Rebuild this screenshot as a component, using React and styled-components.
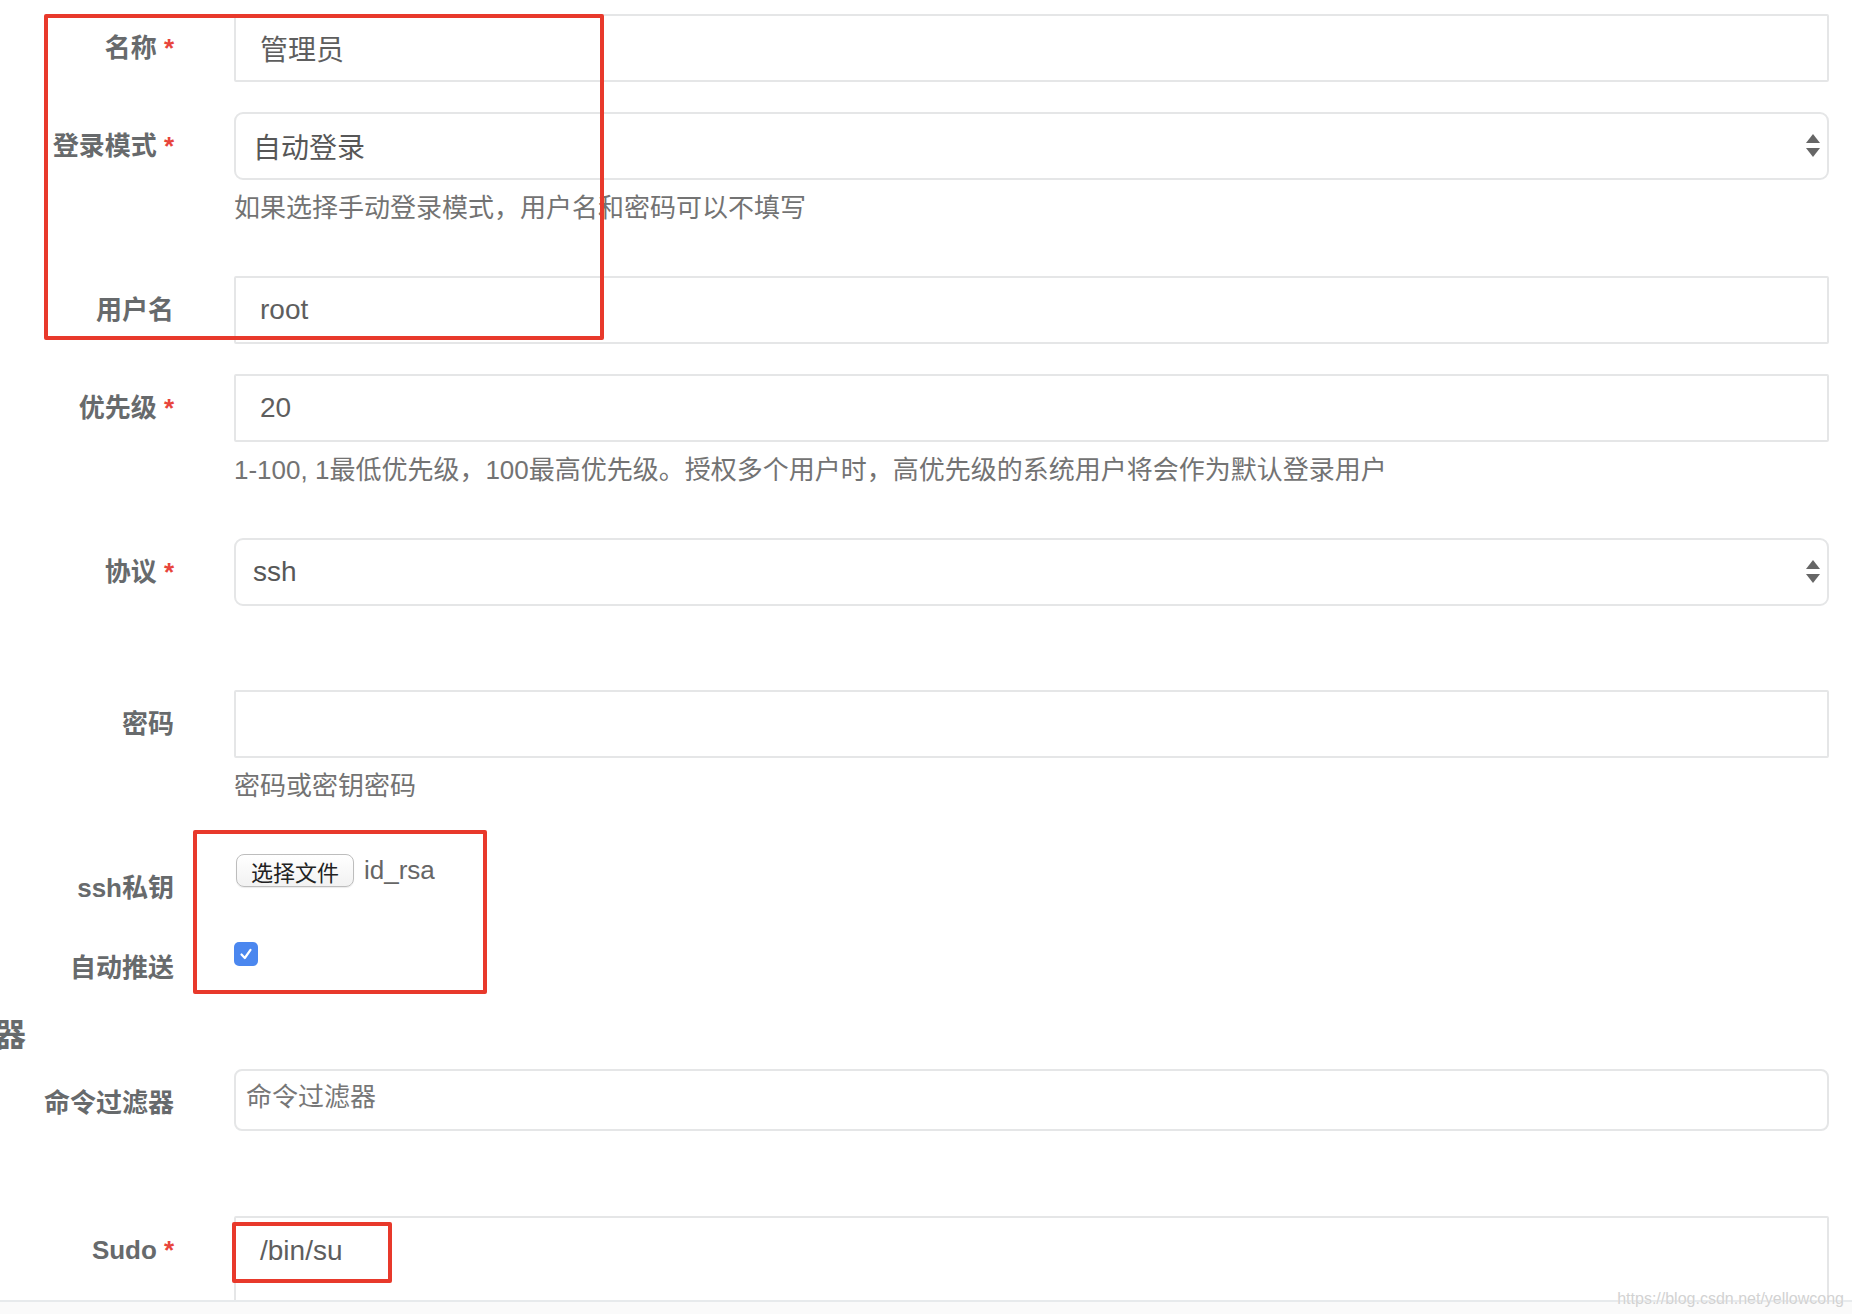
import React from "react";
import styled, { createGlobalStyle } from "styled-components";

const FONT = `"Liberation Sans", "Noto Sans CJK SC", sans-serif`;

const GlobalStyle = createGlobalStyle`
  html, body { margin: 0; padding: 0; background: #fff; }
  body { font-family: ${FONT}; }
  * { box-sizing: border-box; }
`;

const Page = styled.div`
  position: relative;
  width: 1852px;
  height: 1314px;
  overflow: hidden;
  background: #fff;
  display: flex;
  flex-direction: column;
`;

const FormArea = styled.div`
  flex: none;
  height: 1300px;
  overflow: hidden;
  padding: 14px 23px 0 0;
`;

const Footer = styled.div`
  flex: 1;
  border-top: 2px solid #e7eaec;
  background: #fafafa;
`;

const Row = styled.div`
  display: grid;
  grid-template-columns: 174px 1fr;
  column-gap: 60px;
  align-items: start;
  margin-bottom: ${(p) => (p.$mb ?? 30)}px;
`;

const Label = styled.label`
  display: block;
  padding-top: 16px;
  line-height: 36px;
  font-size: 26px;
  font-weight: 700;
  color: #676a6c;
  text-align: right;
  white-space: nowrap;
`;

const Req = styled.span`
  color: #e8453c;
  margin-left: 7px;
`;

const Control = styled.div`
  min-width: 0;
  display: flex;
  flex-direction: column;
`;

const TextInput = styled.input`
  width: 100%;
  height: 68px;
  border: 2px solid #e5e6e7;
  border-radius: 2px;
  padding: 0 24px;
  font: 28px ${FONT};
  color: #5e5e5e;
  background: #fff;
  outline: none;
`;

const SelectBox = styled.div`
  height: 68px;
  border: 2px solid #e5e6e7;
  border-radius: 9px;
  display: flex;
  align-items: center;
  justify-content: space-between;
  padding: 0 7px 0 17px;
  font-size: 28px;
  color: #575757;
  background: #fff;
`;

const Help = styled.div`
  margin: 10px 0 20px;
  font-size: 26px;
  line-height: 36px;
  color: #737373;
  white-space: nowrap;
`;

const FileLine = styled.div`
  display: flex;
  align-items: center;
  gap: 10px;
  padding-left: 2px;
`;

const FileButton = styled.button`
  height: 33px;
  padding: 0 14px;
  border: 1px solid #bdbdbd;
  border-radius: 8px;
  background: linear-gradient(#ffffff, #f2f2f2);
  font: 22px ${FONT};
  color: #222;
  box-shadow: 0 1px 1px rgba(0, 0, 0, 0.08);
`;

const FileName = styled.span`
  font-size: 26px;
  color: #666;
`;

const CheckBox = styled.span`
  margin-top: 8px;
  width: 24px;
  height: 24px;
  border-radius: 5px;
  background: #4b87ef;
  display: flex;
  align-items: center;
  justify-content: center;
`;

const SectionTitle = styled.h3`
  margin: 0 0 15px -134px;
  font-size: 32px;
  line-height: 38px;
  font-weight: 700;
  color: #676a6c;
  white-space: nowrap;
`;

const TagBox = styled.div`
  height: 62px;
  border: 2px solid #e5e6e7;
  border-radius: 8px;
  padding: 8px 10px 0;
  font-size: 26px;
  line-height: 36px;
  color: #777;
  background: #fff;
`;

const TextArea = styled.textarea`
  width: 100%;
  height: 140px;
  border: 2px solid #e5e6e7;
  border-radius: 2px;
  padding: 15px 24px;
  font: 28px/36px ${FONT};
  color: #5e5e5e;
  resize: none;
  outline: none;
  background: #fff;
`;

const Mark = styled.div`
  position: absolute;
  left: ${(p) => p.$x}px;
  top: ${(p) => p.$y}px;
  width: ${(p) => p.$w}px;
  height: ${(p) => p.$h}px;
  border: 4px solid #e8392b;
  border-radius: 2px;
  pointer-events: none;
`;

const Watermark = styled.div`
  position: absolute;
  right: 8px;
  bottom: 6px;
  font: 16px ${FONT};
  color: #d2d2d2;
  text-shadow: 0 0 1px #fff;
`;

const Arrows = () => (
  <svg width="14" height="24" viewBox="0 0 14 24">
    <path d="M0 9 L7 0 L14 9 Z" fill="#666" />
    <path d="M0 14 L14 14 L7 23 Z" fill="#666" />
  </svg>
);

const Check = () => (
  <svg width="16" height="16" viewBox="0 0 16 16">
    <path d="M3.5 8.5 L6.8 12 L12.5 3.8" fill="none" stroke="#fff" strokeWidth="2.2" strokeLinecap="round" strokeLinejoin="round" />
  </svg>
);

const FieldLabel = ({ children, required }) => (
  <Label>
    {children}
    {required && <Req>*</Req>}
  </Label>
);

export default function App() {
  return (
    <>
      <GlobalStyle />
      <Page>
        <FormArea>
          <Row>
            <FieldLabel required>名称</FieldLabel>
            <Control>
              <TextInput readOnly value="管理员" />
            </Control>
          </Row>
          <Row>
            <FieldLabel required>登录模式</FieldLabel>
            <Control>
              <SelectBox>
                <span>自动登录</span>
                <Arrows />
              </SelectBox>
              <Help>如果选择手动登录模式，用户名和密码可以不填写</Help>
            </Control>
          </Row>
          <Row>
            <FieldLabel>用户名</FieldLabel>
            <Control>
              <TextInput readOnly value="root" />
            </Control>
          </Row>
          <Row>
            <FieldLabel required>优先级</FieldLabel>
            <Control>
              <TextInput readOnly value="20" />
              <Help>1-100, 1最低优先级，100最高优先级。授权多个用户时，高优先级的系统用户将会作为默认登录用户</Help>
            </Control>
          </Row>
          <Row $mb={84}>
            <FieldLabel required>协议</FieldLabel>
            <Control>
              <SelectBox>
                <span>ssh</span>
                <Arrows />
              </SelectBox>
            </Control>
          </Row>
          <Row>
            <FieldLabel>密码</FieldLabel>
            <Control>
              <TextInput readOnly value="" />
              <Help>密码或密钥密码</Help>
            </Control>
          </Row>
          <Row $mb={28}>
            <FieldLabel>ssh私钥</FieldLabel>
            <Control>
              <FileLine>
                <FileButton type="button">选择文件</FileButton>
                <FileName>id_rsa</FileName>
              </FileLine>
            </Control>
          </Row>
          <Row>
            <FieldLabel>自动推送</FieldLabel>
            <Control>
              <CheckBox>
                <Check />
              </CheckBox>
            </Control>
          </Row>
          <SectionTitle>命令过滤器</SectionTitle>
          <Row $mb={85}>
            <FieldLabel>命令过滤器</FieldLabel>
            <Control>
              <TagBox>命令过滤器</TagBox>
            </Control>
          </Row>
          <Row>
            <FieldLabel required>Sudo</FieldLabel>
            <Control>
              <TextArea readOnly value="/bin/su" />
            </Control>
          </Row>
        </FormArea>
        <Footer />
        <Mark $x={44} $y={14} $w={560} $h={326} />
        <Mark $x={193} $y={830} $w={294} $h={164} />
        <Mark $x={232} $y={1222} $w={160} $h={61} />
        <Watermark>https://blog.csdn.net/yellowcong</Watermark>
      </Page>
    </>
  );
}
